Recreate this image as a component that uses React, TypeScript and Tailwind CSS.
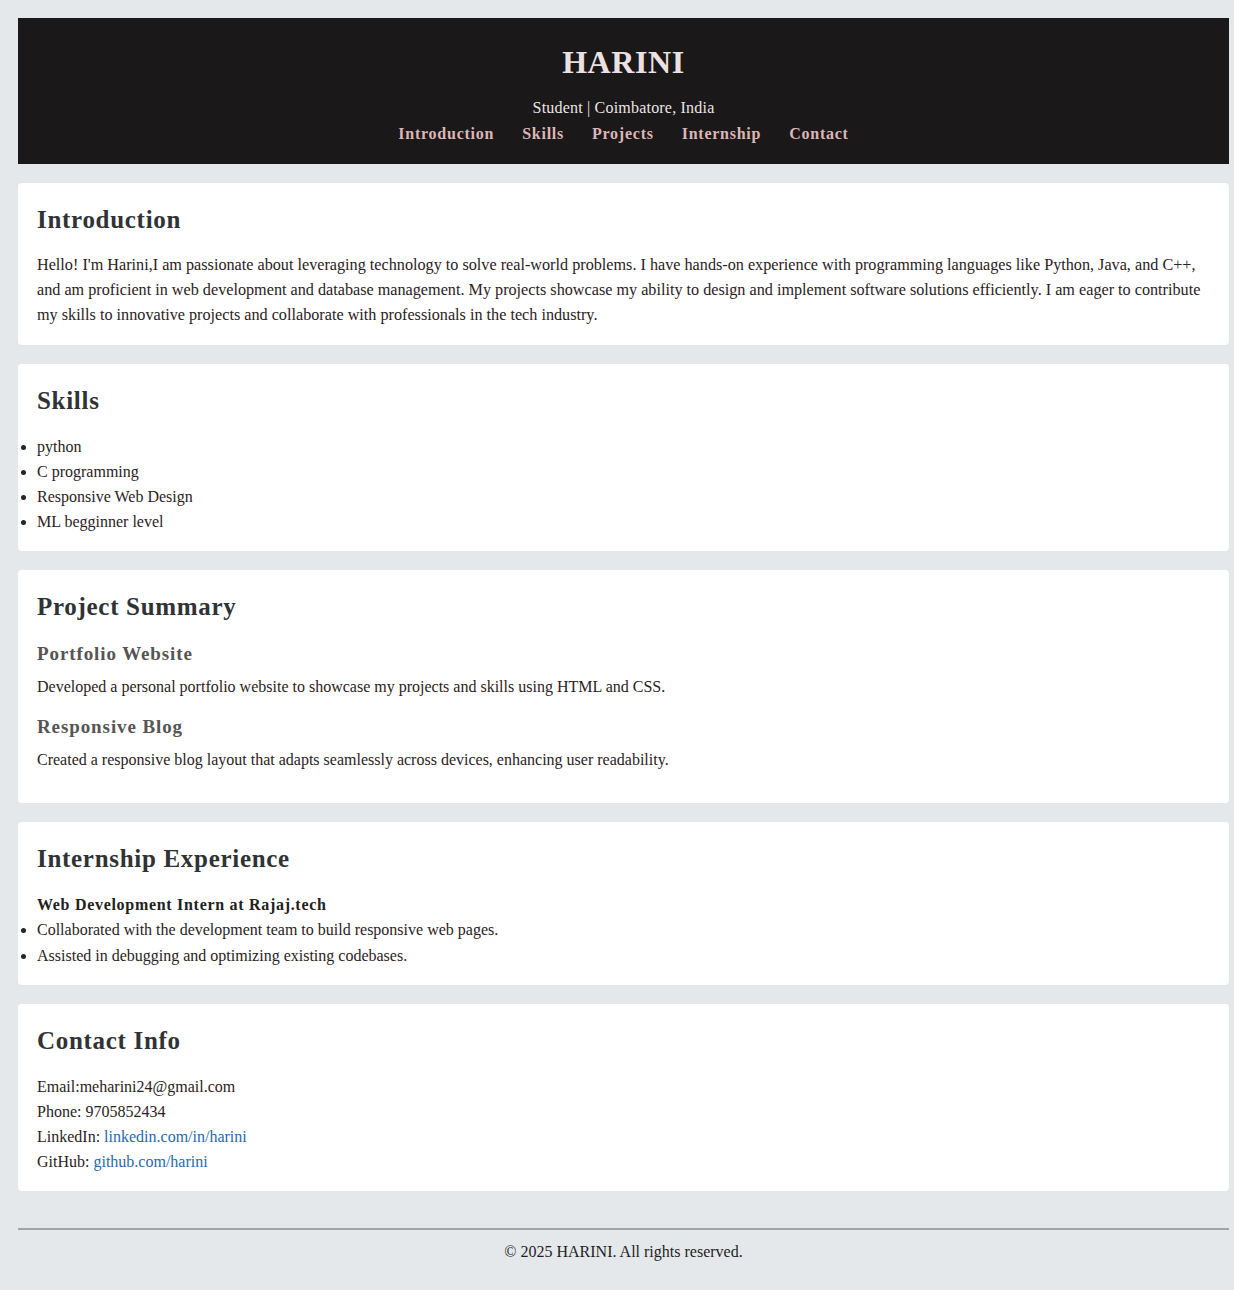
import React from 'react'

const navLinks = ['Introduction', 'Skills', 'Projects', 'Internship', 'Contact']

const skills = ['python', 'C programming', 'Responsive Web Design', 'ML begginner level']

const Card = ({ title, children, className = '' }: { title: string; children: React.ReactNode; className?: string }) => (
    <section className={`bg-white rounded-[4px] px-[19px] pt-[22px] ${className}`}>
        <h2 className="text-[25px] leading-[30px] font-bold tracking-[0.7px] text-[#303335]">{title}</h2>
        {children}
    </section>
)

export default function App() {
    return (
        <div className="min-h-[1290px] bg-[#e5e8eb] pl-[18px] pr-[5px] pt-[18px] text-[#2b2222] font-['Liberation_Serif',serif] text-[16px]">
            {/* Header */}
            <header className="bg-[#1a1818] pt-[26px] pb-[19px] text-center">
                <h1 className="text-[32px] leading-[36px] font-bold tracking-[0.6px] text-[#ece0e0]">HARINI</h1>
                <p className="mt-[17px] leading-[22px] tracking-[0.2px] text-[#ece4e4]">Student | Coimbatore, India</p>
                <nav className="mt-[4px] flex justify-center gap-[28px] leading-[22px] font-bold tracking-[0.75px] text-[#dcb6b6]">
                    {navLinks.map((link) => (
                        <a key={link} href="#">{link}</a>
                    ))}
                </nav>
            </header>

            <div className="mt-[19px] flex flex-col gap-[19px]">
                <Card title="Introduction" className="pb-[17px]">
                    <p className="mt-[18px] leading-[25px] text-[16.2px]">
                        Hello! I'm Harini,I am passionate about leveraging technology to solve real-world problems. I have hands-on experience with programming languages like Python, Java, and C++, and am proficient in web development and database management. My projects showcase my ability to design and implement software solutions efficiently. I am eager to contribute my skills to innovative projects and collaborate with professionals in the tech industry.
                    </p>
                </Card>

                <Card title="Skills" className="pb-[17px]">
                    <ul className="mt-[18px] list-disc leading-[25px]">
                        {skills.map((s) => (
                            <li key={s}>{s}</li>
                        ))}
                    </ul>
                </Card>

                <Card title="Project Summary" className="pb-[31px]">
                    <h3 className="mt-[20px] text-[19px] leading-[24px] font-bold tracking-[0.9px] text-[#555555]">Portfolio Website</h3>
                    <p className="mt-[8px] leading-[25px]">Developed a personal portfolio website to showcase my projects and skills using HTML and CSS.</p>
                    <h3 className="mt-[16px] text-[19px] leading-[24px] font-bold tracking-[0.9px] text-[#555555]">Responsive Blog</h3>
                    <p className="mt-[8px] leading-[25px]">Created a responsive blog layout that adapts seamlessly across devices, enhancing user readability.</p>
                </Card>

                <Card title="Internship Experience" className="pb-[17px]">
                    <p className="mt-[18px] leading-[25px] font-bold tracking-[0.7px] text-[#222222]">Web Development Intern at Rajaj.tech</p>
                    <ul className="list-disc leading-[25.5px]">
                        <li>Collaborated with the development team to build responsive web pages.</li>
                        <li>Assisted in debugging and optimizing existing codebases.</li>
                    </ul>
                </Card>

                <Card title="Contact Info" className="pb-[17px]">
                    <div className="mt-[18px] leading-[25px]">
                        <p>Email:meharini24@gmail.com</p>
                        <p>Phone: 9705852434</p>
                        <p>LinkedIn: <a href="#" className="text-[#1f6bb0]">linkedin.com/in/harini</a></p>
                        <p>GitHub: <a href="#" className="text-[#1f6bb0]">github.com/harini</a></p>
                    </div>
                </Card>
            </div>

            {/* Footer */}
            <footer className="mt-[37px] border-t-2 border-[#a3a3a3] pt-[11px] pb-[28px] text-center leading-[22px] text-[#1e1e1e]">
                © 2025 HARINI. All rights reserved.
            </footer>
        </div>
    )
}
